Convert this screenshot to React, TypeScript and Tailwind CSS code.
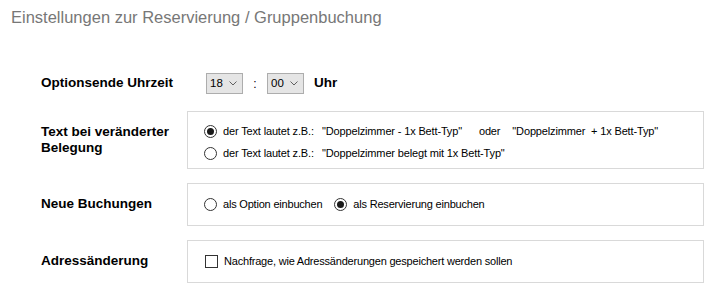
import React from "react";

function Radio({ checked }: { checked?: boolean }) {
  return (
    <span className="w-[13px] h-[13px] rounded-full border border-[#333333] bg-white flex items-center justify-center shrink-0">
      {checked && <span className="w-[7px] h-[7px] rounded-full bg-[#1a1a1a]" />}
    </span>
  );
}

function Combo({ value }: { value: string }) {
  return (
    <div className="w-[37px] h-[21px] bg-[#e5e5e5] border border-[#adadad] flex items-center pl-[3px] pr-[5px] justify-between text-[11.5px] text-black">
      <span>{value}</span>
      <svg width="8" height="5" viewBox="0 0 8 5">
        <polyline points="0.5,0.5 4,4 7.5,0.5" fill="none" stroke="#606060" strokeWidth="1" />
      </svg>
    </div>
  );
}

export default function App() {
  return (
    <div className="w-[726px] h-[307px] bg-white font-['Liberation_Sans',Arial,sans-serif] text-black">
      <div className="pl-[11px] pt-[7px] text-[16.5px] leading-[20px] text-[#777777]">
        Einstellungen zur Reservierung / Gruppenbuchung
      </div>

      <div className="pl-[41px] pr-[22px] flex flex-col">
        {/* Optionsende Uhrzeit */}
        <div className="flex items-center h-[21px] mt-[46px]">
          <div className="w-[146px] text-[13.5px] font-bold">Optionsende Uhrzeit</div>
          <div className="flex items-center ml-[19px]">
            <Combo value="18" />
            <span className="w-[24px] text-center text-[12px]">:</span>
            <Combo value="00" />
            <span className="ml-[10px] text-[13.5px] font-bold">Uhr</span>
          </div>
        </div>

        {/* Text bei veränderter Belegung */}
        <div className="flex items-center mt-[17px]">
          <div className="w-[146px] text-[13.5px] font-bold leading-[16px]">
            Text bei veränderter
            <br />
            Belegung
          </div>
          <div className="flex-1 h-[58px] border border-[#d9d9d9] pl-[16px] pt-[8px] flex flex-col text-[11px] tracking-[-0.15px]">
            <div className="flex items-center h-[22px]">
              <Radio checked />
              <span className="ml-[6px] w-[99px]">der Text lautet z.B.:</span>
              <span className="whitespace-pre">"Doppelzimmer - 1x Bett-Typ"</span>
              <span className="ml-[17px]">oder</span>
              <span className="ml-[12px] whitespace-pre">"Doppelzimmer  + 1x Bett-Typ"</span>
            </div>
            <div className="flex items-center h-[22px]">
              <Radio />
              <span className="ml-[6px] w-[99px]">der Text lautet z.B.:</span>
              <span className="whitespace-pre">"Doppelzimmer belegt mit 1x Bett-Typ"</span>
            </div>
          </div>
        </div>

        {/* Neue Buchungen */}
        <div className="flex items-center mt-[14px]">
          <div className="w-[146px] text-[13.5px] font-bold">Neue Buchungen</div>
          <div className="flex-1 h-[43px] border border-[#d9d9d9] pl-[16px] flex items-center text-[11px] tracking-[-0.2px]">
            <Radio />
            <span className="ml-[6px]">als Option einbuchen</span>
            <span className="ml-[12px]">
              <Radio checked />
            </span>
            <span className="ml-[6px]">als Reservierung einbuchen</span>
          </div>
        </div>

        {/* Adressänderung */}
        <div className="flex items-center mt-[14px]">
          <div className="w-[146px] text-[13.5px] font-bold">Adressänderung</div>
          <div className="flex-1 h-[43px] border border-[#d9d9d9] pl-[17px] flex items-center text-[11px] tracking-[-0.2px]">
            <span className="w-[13px] h-[13px] border border-[#333333] bg-white shrink-0" />
            <span className="ml-[6px]">Nachfrage, wie Adressänderungen gespeichert werden sollen</span>
          </div>
        </div>
      </div>
    </div>
  );
}
